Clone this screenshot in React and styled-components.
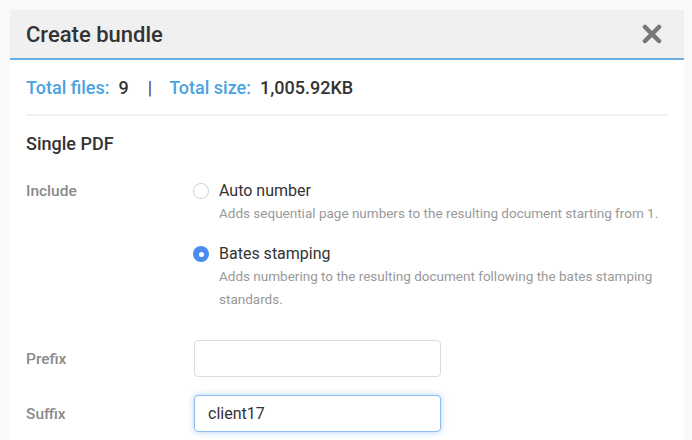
import React from "react"
import styled, { createGlobalStyle } from "styled-components"

const GlobalStyle = createGlobalStyle`
  body {
    margin: 0;
    background: #f9f9f9;
    font-family: Roboto, "Liberation Sans", Arial, sans-serif;
  }
`

const Modal = styled.div`
  margin: 10px 8px 0 10px;
  width: 674px;
  height: 430px;
  background: #fff;
  overflow: hidden;
`
const Header = styled.header`
  display: flex;
  align-items: center;
  justify-content: space-between;
  height: 48px;
  padding: 0 22px 0 16px;
  background: #f0f0f0;
  border-bottom: 2px solid #68aee3;
`
const Title = styled.h1`
  margin: 0;
  font-size: 22px;
  font-weight: 500;
  color: #333;
`
const Close = styled.button`
  display: flex;
  padding: 0;
  border: none;
  background: none;
  cursor: pointer;
`
const Body = styled.div`
  padding: 0 16px;
`
const Stats = styled.div`
  display: flex;
  align-items: center;
  gap: 9px;
  height: 54px;
  font-size: 18px;
  font-weight: 500;
  border-bottom: 2px solid #f0f0f0;
`
const StatLabel = styled.span`
  color: #4aa3df;
`
const StatValue = styled.span`
  color: #333;
`
const Sep = styled.span`
  color: #444;
  margin: 0 8px 0 10px;
  font-weight: 400;
`
const Section = styled.h2`
  margin: 17px 0 0;
  font-size: 18px;
  line-height: 22px;
  font-weight: 500;
  color: #333;
`
const Row = styled.div`
  display: grid;
  grid-template-columns: 169px 1fr;
  align-items: ${(p) => p.$align || "center"};
  margin-top: ${(p) => p.$top || 0}px;
`
const Label = styled.div`
  font-size: 15.5px;
  line-height: 22px;
  font-weight: 500;
  color: #8a8a8a;
`
const Options = styled.div`
  display: flex;
  flex-direction: column;
  gap: 18px;
`
const Option = styled.label`
  display: grid;
  grid-template-columns: 24px 1fr;
  align-items: center;
  cursor: pointer;
`
const Radio = styled.span`
  width: 16px;
  height: 16px;
  border-radius: 50%;
  box-sizing: border-box;
  margin-left: -2px;
  border: ${(p) => (p.$checked ? "none" : "1px solid #d2d2d2")};
  background: ${(p) => (p.$checked ? "#4a8cf0" : "#fff")};
  display: flex;
  align-items: center;
  justify-content: center;
  &::after {
    content: "";
    display: ${(p) => (p.$checked ? "block" : "none")};
    width: 5px;
    height: 5px;
    border-radius: 50%;
    background: #fff;
  }
`
const OptionTitle = styled.span`
  font-size: 16px;
  color: #333;
  line-height: 22px;
`
const OptionDesc = styled.span`
  grid-column: 2;
  font-size: 13.5px;
  color: #999;
  line-height: 23px;
`
const Input = styled.input`
  box-sizing: border-box;
  width: 247px;
  height: 37px;
  margin-left: -1px;
  padding: 0 13px;
  font-family: inherit;
  font-size: 16px;
  color: #333;
  border: 1px solid ${(p) => (p.$focused ? "#8fbdf0" : "#dcdcdc")};
  border-radius: 4px;
  outline: none;
  box-shadow: ${(p) => (p.$focused ? "0 0 6px rgba(110, 170, 240, 0.55)" : "none")};
  caret-color: #333;
`

const options = [
  {
    title: "Auto number",
    desc: "Adds sequential page numbers to the resulting document starting from 1.",
    checked: false,
  },
  {
    title: "Bates stamping",
    desc: "Adds numbering to the resulting document following the bates stamping standards.",
    checked: true,
  },
]

const App = () => (
  <>
    <GlobalStyle />
    <Modal>
      <Header>
        <Title>Create bundle</Title>
        <Close aria-label="Close">
          <svg width="20" height="20" viewBox="0 0 20 20">
            <path d="M3 3 L17 17 M17 3 L3 17" stroke="#777" strokeWidth="4.5" strokeLinecap="round" />
          </svg>
        </Close>
      </Header>
      <Body>
        <Stats>
          <StatLabel>Total files:</StatLabel>
          <StatValue>9</StatValue>
          <Sep>|</Sep>
          <StatLabel>Total size:</StatLabel>
          <StatValue>1,005.92KB</StatValue>
        </Stats>
        <Section>Single PDF</Section>
        <Row $align="start" $top={25}>
          <Label>Include</Label>
          <Options>
            {options.map((o) => (
              <Option key={o.title}>
                <Radio $checked={o.checked} />
                <OptionTitle>{o.title}</OptionTitle>
                <OptionDesc>{o.desc}</OptionDesc>
              </Option>
            ))}
          </Options>
        </Row>
        <Row $top={29}>
          <Label>Prefix</Label>
          <Input defaultValue="" />
        </Row>
        <Row $top={18}>
          <Label>Suffix</Label>
          <Input $focused defaultValue="client17" autoFocus />
        </Row>
      </Body>
    </Modal>
  </>
)

export default App
